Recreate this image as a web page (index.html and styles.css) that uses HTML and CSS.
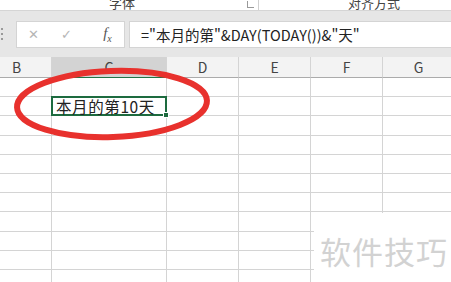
FILE: index.html
```html
<!DOCTYPE html>
<html lang="zh-CN">
<head>
  <meta charset="UTF-8" />
  <title>本月的第几天</title>
  <link rel="stylesheet" href="styles.css">
</head>
<body>
  <div class="ribbon">
    <div class="group group-font">
      <span class="group-label">字体</span>
      <span class="launcher"></span>
    </div>
    <div class="group group-align">
      <span class="group-label">对齐方式</span>
    </div>
  </div>

  <div class="formula-area">
    <div class="grip"><i></i><i></i><i></i></div>
    <div class="formula-buttons">
      <span class="btn cancel">✕</span>
      <span class="btn enter">✓</span>
      <span class="btn fx">f<sub>x</sub></span>
    </div>
    <div class="formula-input">="本月的第"&amp;DAY(TODAY())&amp;"天"</div>
  </div>

  <div class="sheet">
    <div class="grid" id="grid"></div>

    <svg class="mark" width="451" height="230" viewBox="0 0 451 230">
      <ellipse cx="112" cy="47" rx="95" ry="33" transform="rotate(-2 112 47)" />
    </svg>

    <div class="watermark">软件技巧</div>
  </div>

  <script>
    const cols = ['B', 'C', 'D', 'E', 'F', 'G'];
    const grid = document.getElementById('grid');

    cols.forEach(c => {
      const h = document.createElement('div');
      h.className = 'head' + (c === 'C' ? ' head-active' : '');
      h.textContent = c;
      grid.appendChild(h);
    });

    for (let r = 0; r < 11; r++) {
      cols.forEach(c => {
        const cell = document.createElement('div');
        cell.className = 'cell';
        if (r === 1 && c === 'C') {
          cell.className += ' cell-active';
          cell.innerHTML = '本月的第10天<span class="handle"></span>';
        }
        grid.appendChild(cell);
      });
    }
  </script>
</body>
</html>
```

FILE: styles.css
```css
* {
  box-sizing: border-box;
}

body {
  margin: 0;
  width: 451px;
  height: 282px;
  overflow: hidden;
  background: #fff;
  font-family: "Noto Sans CJK SC", "Noto Sans", sans-serif;
  color: #222;
}

/* ribbon bottom */
.ribbon {
  display: flex;
  height: 11px;
  background: #fff;
  border-bottom: 1px solid #d5d5d5;
  overflow: hidden;
}

.group {
  position: relative;
  display: flex;
  align-items: flex-end;
  height: 10px;
  font-size: 13px;
  line-height: 13px;
  color: #444;
}

.group-font {
  flex: 0 0 259px;
  padding-left: 109px;
  border-right: 1px solid #d0d0d0;
}

.group-align {
  flex: 1;
  padding-left: 89px;
}

.group-label {
  margin-bottom: 1px;
}

.launcher {
  position: absolute;
  right: 4px;
  top: 1px;
  width: 7px;
  height: 7px;
  border-left: 1px solid #999;
  border-bottom: 1px solid #999;
}

/* formula bar */
.formula-area {
  display: flex;
  align-items: center;
  gap: 4px;
  height: 46px;
  background: #e6e6e6;
}

.grip {
  display: flex;
  flex-direction: column;
  gap: 3px;
  width: 12px;
  padding-left: 1px;
}

.grip i {
  display: block;
  width: 2px;
  height: 2px;
  background: #999;
}

.formula-buttons {
  display: flex;
  align-items: center;
  width: 109px;
  height: 27px;
  background: #fff;
  border: 1px solid #d4d4d4;
}

.btn {
  flex: 1;
  text-align: center;
  font-family: "DejaVu Sans", sans-serif;
  font-size: 13px;
  color: #b5b5b5;
}

.btn.fx {
  font-family: "Liberation Serif", serif;
  font-style: italic;
  font-size: 15px;
  color: #555;
  padding-left: 8px;
}

.btn.fx sub {
  font-size: 10px;
}

.formula-input {
  flex: 1;
  height: 27px;
  padding-left: 11px;
  background: #fff;
  border: 1px solid #d4d4d4;
  border-right: none;
  font-size: 14.5px;
  line-height: 25px;
  color: #222;
}

/* sheet */
.sheet {
  position: relative;
}

.grid {
  display: grid;
  grid-template-columns: 52px 115px 72px 72px 72px 72px;
  grid-template-rows: 21px;
  grid-auto-rows: 19.2px;
}

.head {
  background: #f3f3f3;
  border-right: 1px solid #d4d4d4;
  border-bottom: 1px solid #ababab;
  text-align: center;
  font-size: 14px;
  line-height: 21px;
  color: #444;
}

.head:first-child {
  text-align: left;
  padding-left: 12px;
}

.head-active {
  background: #d3d3d3;
  border-bottom: 1px solid #217346;
}

.cell {
  position: relative;
  border-right: 1px solid #d4d4d4;
  border-bottom: 1px solid #d4d4d4;
  font-size: 15.5px;
  line-height: 18px;
  letter-spacing: 0.6px;
  white-space: nowrap;
}

.cell-active {
  margin: -1px 0 0 -1px;
  padding-left: 3px;
  border: 2px solid #1d6b3f;
  line-height: 17px;
  z-index: 1;
}

.handle {
  position: absolute;
  right: -4px;
  bottom: -4px;
  width: 6px;
  height: 6px;
  background: #1d6b3f;
  border: 1px solid #fff;
}

.mark {
  position: absolute;
  left: 0;
  top: 0;
  z-index: 2;
}

.mark ellipse {
  fill: none;
  stroke: #e8312d;
  stroke-width: 6;
}

.watermark {
  position: absolute;
  left: 314px;
  top: 156px;
  width: 137px;
  height: 80px;
  padding: 15px 0 0 6px;
  background: #fff;
  font-size: 31px;
  letter-spacing: 1px;
  color: #d2d2d2;
  z-index: 3;
}
```
